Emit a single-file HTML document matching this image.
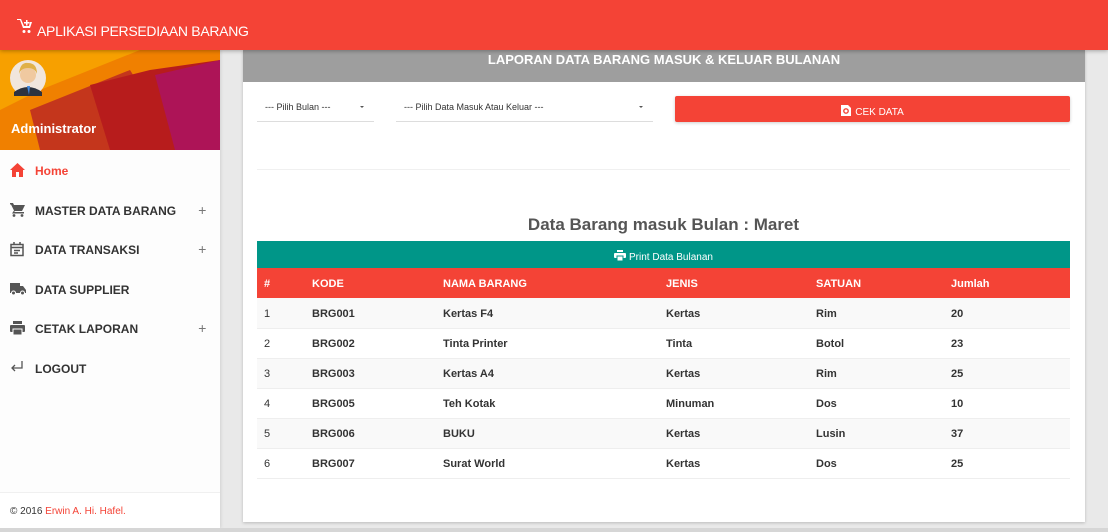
<!DOCTYPE html>
<html><head><meta charset="utf-8"><style>
*{margin:0;padding:0;box-sizing:border-box}
body{width:1108px;height:532px;overflow:hidden;background:#e9e9e9;font-family:"Liberation Sans",Arial,sans-serif;position:relative}
.top{position:absolute;left:0;top:0;width:1108px;height:50px;background:#f44336;z-index:5;box-shadow:0 1px 4px rgba(0,0,0,.3)}
.top .t{position:absolute;left:37px;top:23px;color:#fff;font-size:14px;letter-spacing:-0.3px}
.side{position:absolute;left:0;top:50px;width:220px;height:478px;background:#fdfdfd;box-shadow:1px 0 3px rgba(0,0,0,.1)}
.up{position:absolute;left:0;top:0;width:220px;height:100px;overflow:hidden;background:#f57c00}
.menu{position:absolute;top:100px;left:0;width:220px}
.mi{height:39.6px;position:relative;font-size:12px;font-weight:bold;color:#333}
.mi span{position:absolute;left:35px;top:14px}
.mi svg{position:absolute;left:10px;top:13px}
.mi .p{position:absolute;left:198px;top:12px;font-weight:normal;color:#777;font-size:14px}
.foot{position:absolute;left:0;top:442px;width:220px;height:36px;background:#fff;border-top:1px solid #f0f0f0;font-size:10px;color:#333;padding:13px 0 0 10px}
.card{position:absolute;left:243px;top:50px;width:842px;height:472px;background:#fff;box-shadow:0 1px 3px rgba(0,0,0,.2)}
.hd{height:32px;background:#9e9e9e;color:#fff;font-weight:bold;font-size:13px;text-align:center;padding-top:2px}
.sel{position:absolute;top:46px;height:26px;border-bottom:1px solid #ddd;font-size:9px;color:#333;padding:6px 0 0 8px}
.sel b{position:absolute;right:10px;top:10px;border:2px solid transparent;border-top:2px solid #555}
.btn{position:absolute;left:432px;top:46px;width:395px;height:26px;background:#f44336;color:#fff;font-size:10px;text-align:center;padding-top:9px;border-radius:2px;box-shadow:0 1px 3px rgba(0,0,0,.2)}
.hr{position:absolute;left:14px;top:119px;width:813px;height:1px;background:#f0f0f0}
h2{position:absolute;left:14px;width:813px;top:165px;text-align:center;font-size:17px;color:#555}
.pr{position:absolute;left:14px;top:191px;width:813px;height:27px;background:#009688;color:#fff;font-size:10px;text-align:center;padding-top:9px}
table{position:absolute;left:14px;top:218px;width:813px;border-collapse:collapse;font-size:11px;color:#333}
th{background:#f44336;color:#fff;text-align:left;height:30px;font-size:11px;padding-top:2px}
td{height:30px;border-bottom:1px solid #eee;font-weight:bold;padding-top:2px}
td:first-child{font-weight:normal}
tr.o td{background:#f9f9f9}
th:nth-child(1),td:nth-child(1){padding-left:7px;width:55px}
</style></head><body>
<div class="top">
<svg style="position:absolute;left:17px;top:19px" width="16" height="15" viewBox="0 0 16 15" fill="#fff"><path d="M0 1h3l3 8h7l2-6h-2l-1 4H7L4 0H0z"/><circle cx="7" cy="12.5" r="1.5"/><circle cx="12" cy="12.5" r="1.5"/><path d="M9 1h1.5v2h2v1.5h-2v2H9v-2H7V3h2z"/></svg>
<div class="t">APLIKASI PERSEDIAAN BARANG</div></div>
<div class="side">
<div class="up"><svg width="220" height="100">
<rect width="220" height="100" fill="#f08000"/>
<polygon points="0,0 140,0 40,40 0,60" fill="#f7a000"/>
<polygon points="30,60 130,20 180,100 40,100" fill="#c4361c"/>
<polygon points="90,35 150,20 220,10 220,100 110,100" fill="#b71c1c"/>
<polygon points="155,25 220,10 220,100 175,100" fill="#ad1457"/>
<circle cx="28" cy="28" r="18" fill="#f1e6dd"/>
<path d="M14 42q14-10 28 0v4H14z" fill="#2d3340"/><path d="M27 36h3l-1 9z" fill="#3f88e0"/>
<circle cx="28" cy="25" r="8" fill="#f0c9a0"/><path d="M19 24q1-12 9-11q9 0 9 11q-2-6-9-6q-7 0-9 6z" fill="#e0b14a"/>
<text x="11" y="83" fill="#fff" font-weight="bold" font-size="13" font-family="Liberation Sans,sans-serif">Administrator</text></svg></div>
<div class="menu">
<div class="mi" style="color:#f44336"><svg width="15" height="14" viewBox="0 0 15 14" fill="#f44336"><path d="M7.5 0L0 7h2v7h4V9h3v5h4V7h2z"/></svg><span>Home</span></div>
<div class="mi"><svg width="15" height="14" viewBox="0 0 15 14" fill="#555"><path d="M0 0h3l1 2h11l-3 6H5l-1 1h10v1.5H2l2-3L1 1.5H0z"/><circle cx="4" cy="12.5" r="1.4"/><circle cx="12" cy="12.5" r="1.4"/></svg><span>MASTER DATA BARANG</span><i class="p">+</i></div>
<div class="mi"><svg width="14" height="15" viewBox="0 0 14 15" fill="none" stroke="#555" stroke-width="1.5"><rect x="1" y="2.5" width="12" height="11"/><path d="M1 5.5h12M4 0v3M10 0v3M4 8.5h6M4 11h4"/></svg><span>DATA TRANSAKSI</span><i class="p">+</i></div>
<div class="mi"><svg width="16" height="13" viewBox="0 0 16 13" fill="#555"><path d="M0 1h10v3h3l3 4v3H0z"/><circle cx="3.5" cy="11" r="2" fill="#555" stroke="#fff"/><circle cx="12.5" cy="11" r="2" fill="#555" stroke="#fff"/></svg><span>DATA SUPPLIER</span></div>
<div class="mi"><svg width="15" height="14" viewBox="0 0 15 14" fill="#555"><rect x="3" y="0" width="9" height="3"/><rect x="0" y="4" width="15" height="7" rx="1"/><rect x="3" y="8" width="9" height="6" fill="#555" stroke="#fff"/></svg><span>CETAK LAPORAN</span><i class="p">+</i></div>
<div class="mi"><svg width="14" height="12" viewBox="0 0 14 12" fill="none" stroke="#555" stroke-width="1.3"><path d="M12 0v7H2M5 4L2 7l3 3"/></svg><span>LOGOUT</span></div>
</div>
<div class="foot">© 2016 <span style="color:#f44336">Erwin A. Hi. Hafel.</span></div>
</div>
<div class="card">
<div class="hd">LAPORAN DATA BARANG MASUK &amp; KELUAR BULANAN</div>
<div class="sel" style="left:14px;width:117px">--- Pilih Bulan ---<b></b></div>
<div class="sel" style="left:153px;width:257px">--- Pilih Data Masuk Atau Keluar ---<b></b></div>
<div class="btn"><svg width="10" height="11" viewBox="0 0 10 11" style="vertical-align:-1px;margin-right:4px"><path d="M0 0h7l3 3v8H0z" fill="#fff"/><circle cx="5" cy="6" r="2.2" fill="none" stroke="#f44336" stroke-width="1.4"/></svg>CEK DATA</div>
<div class="hr"></div>
<h2>Data Barang masuk Bulan : Maret</h2>
<div class="pr"><svg width="12" height="11" viewBox="0 0 12 11" style="vertical-align:-1px;margin-right:3px" fill="#fff"><rect x="3" y="0" width="6" height="2"/><rect x="0" y="3" width="12" height="5" rx="1"/><rect x="3" y="6" width="6" height="5" stroke="#009688"/></svg>Print Data Bulanan</div>
<table>
<tr><th>#</th><th style="width:131px">KODE</th><th style="width:223px">NAMA BARANG</th><th style="width:150px">JENIS</th><th style="width:135px">SATUAN</th><th>Jumlah</th></tr>
<tr class="o"><td>1</td><td>BRG001</td><td>Kertas F4</td><td>Kertas</td><td>Rim</td><td>20</td></tr>
<tr><td>2</td><td>BRG002</td><td>Tinta Printer</td><td>Tinta</td><td>Botol</td><td>23</td></tr>
<tr class="o"><td>3</td><td>BRG003</td><td>Kertas A4</td><td>Kertas</td><td>Rim</td><td>25</td></tr>
<tr><td>4</td><td>BRG005</td><td>Teh Kotak</td><td>Minuman</td><td>Dos</td><td>10</td></tr>
<tr class="o"><td>5</td><td>BRG006</td><td>BUKU</td><td>Kertas</td><td>Lusin</td><td>37</td></tr>
<tr><td>6</td><td>BRG007</td><td>Surat World</td><td>Kertas</td><td>Dos</td><td>25</td></tr>
</table>
</div>
<div style="position:absolute;left:0;top:528px;width:1108px;height:4px;background:#d6d6d6"></div>
</body></html>
